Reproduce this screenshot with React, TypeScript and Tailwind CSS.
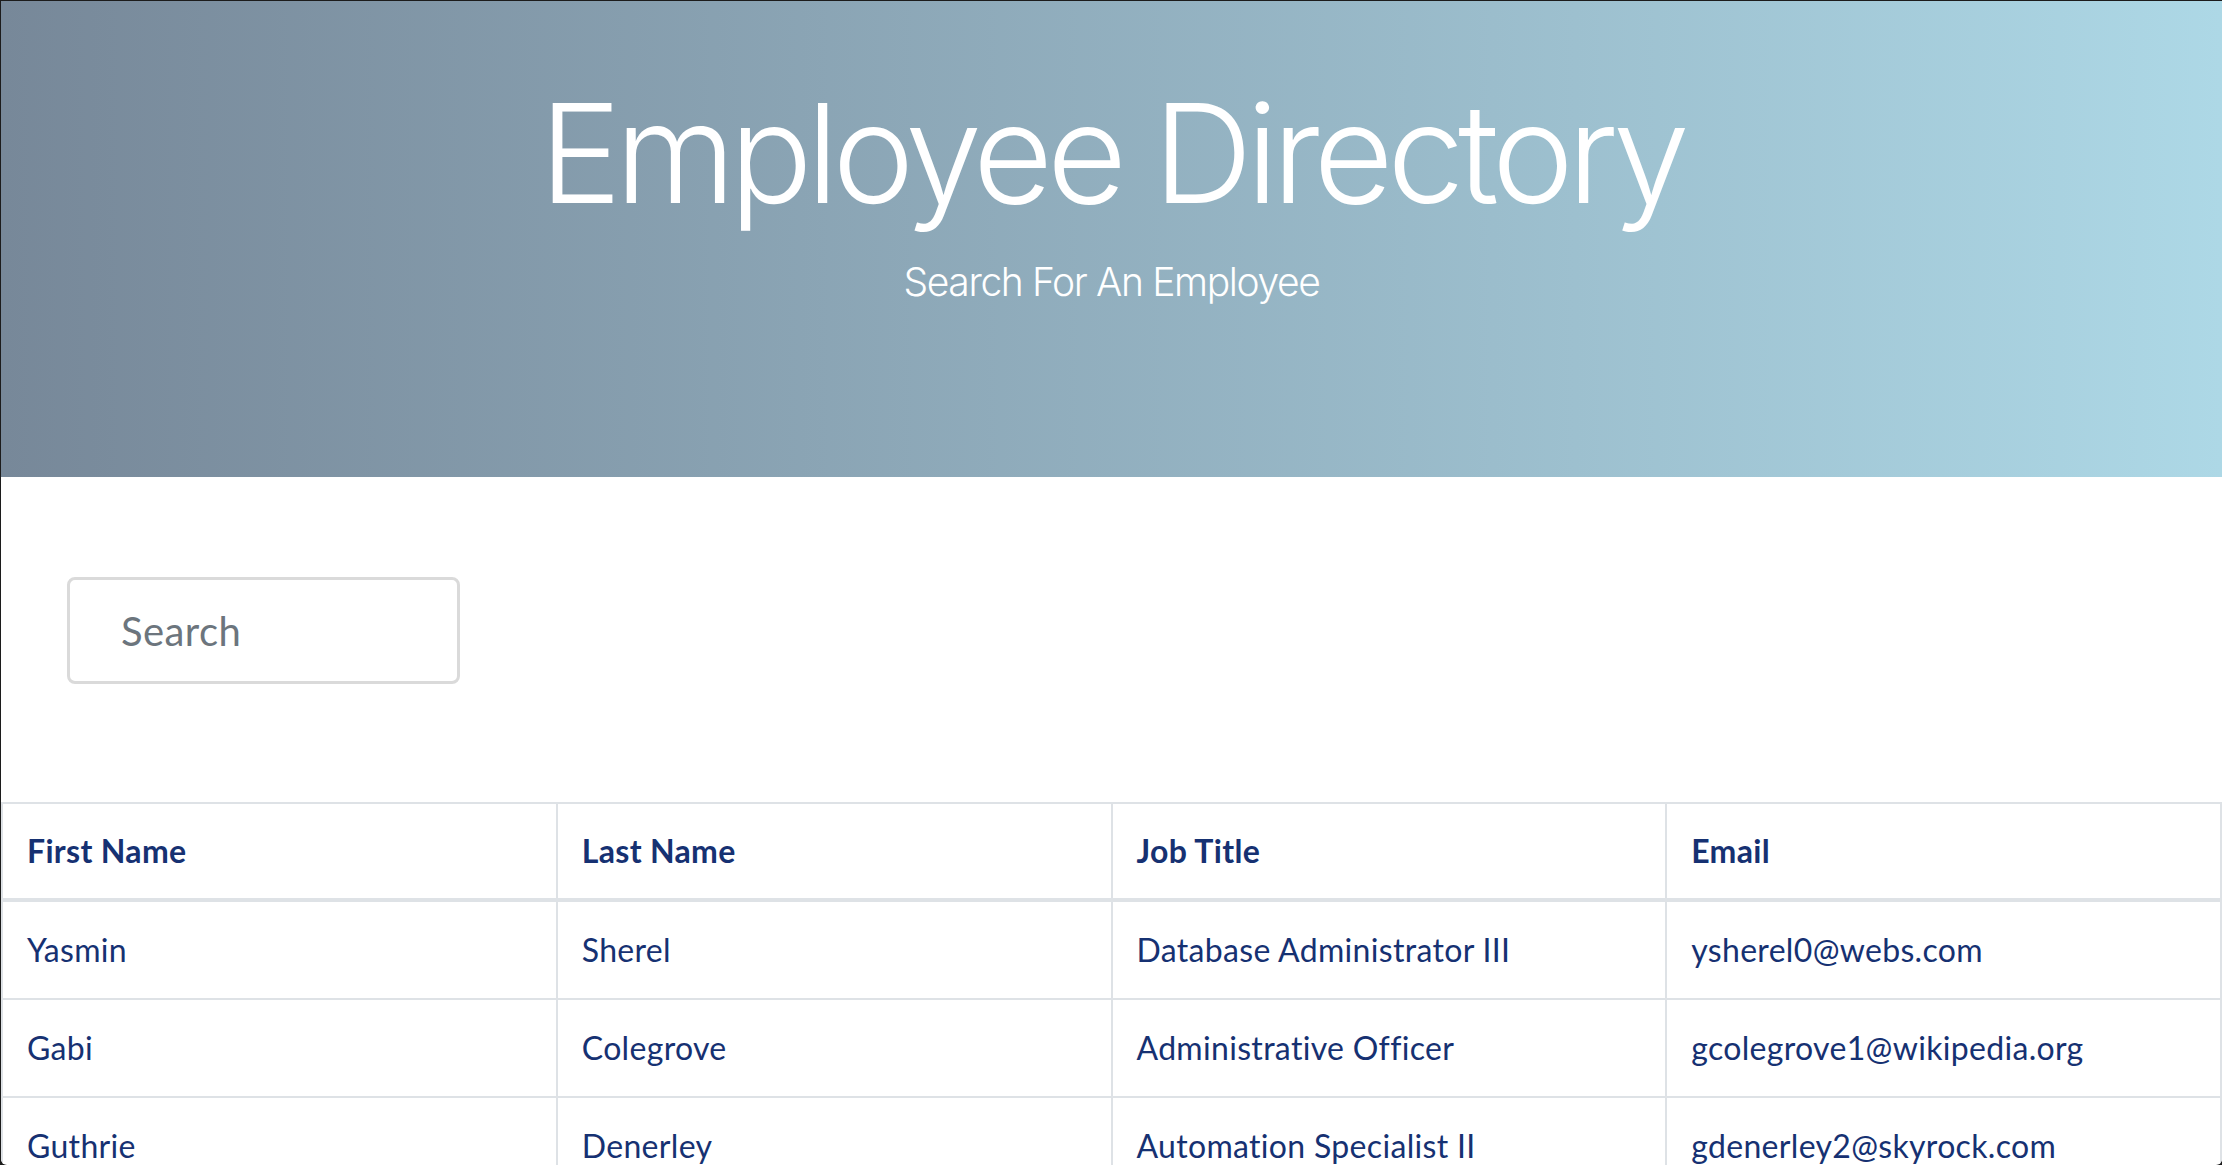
import React, { useState } from 'react';

type Employee = { first: string; last: string; title: string; email: string };

const employees: Employee[] = [
    { first: 'Yasmin', last: 'Sherel', title: 'Database Administrator III', email: 'ysherel0@webs.com' },
    { first: 'Gabi', last: 'Colegrove', title: 'Administrative Officer', email: 'gcolegrove1@wikipedia.org' },
    { first: 'Guthrie', last: 'Denerley', title: 'Automation Specialist II', email: 'gdenerley2@skyrock.com' },
    { first: 'Ardys', last: 'Ellerby', title: 'Analyst Programmer', email: 'aellerby3@google.ca' },
];

const Header = () => (
    <header className="h-[476px] shrink-0 bg-linear-to-r from-[#778899] to-[#add8e6] text-white text-center font-['Inter',sans-serif] pt-[69px]">
        <h1 className="text-[138px] leading-[166px] font-light tracking-[-0.045em]">Employee Directory</h1>
        <p className="mt-[17px] text-[39px] leading-[58px] font-light tracking-[-0.035em]">Search For An Employee</p>
    </header>
);

const SearchBox = ({ value, onChange }: { value: string; onChange: (v: string) => void }) => (
    <div className="pt-[100px] pb-[118px] pl-[66px]">
        <input
            value={value}
            onChange={e => onChange(e.target.value)}
            placeholder="Search"
            className="w-[393px] h-[107px] border-[3px] border-[#dadada] rounded-[8px] pl-[51px] text-[40px] tracking-[0.01em] font-['Lato',sans-serif] text-[#495057] placeholder:text-[#6c757d] outline-none"
        />
    </div>
);

const cell = 'leading-[48px] px-6 py-6 border-r-2 border-b-2 border-[#dee2e6]';

const EmployeeTable = ({ rows }: { rows: Employee[] }) => (
    <table className="w-full table-fixed border-separate border-spacing-0 border-t-2 border-l-2 border-[#dee2e6] font-['Lato',sans-serif] text-[32px] tracking-[0.01em] text-[#163172]">
        <thead>
            <tr>
                {['First Name', 'Last Name', 'Job Title', 'Email'].map(h => (
                    <th key={h} className="text-left font-bold leading-[48px] px-6 py-[23px] border-r-2 border-b-4 border-[#dee2e6]">{h}</th>
                ))}
            </tr>
        </thead>
        <tbody>
            {rows.map(r => (
                <tr key={r.email}>
                    <td className={cell}>{r.first}</td>
                    <td className={cell}>{r.last}</td>
                    <td className={cell}>{r.title}</td>
                    <td className={cell}>{r.email}</td>
                </tr>
            ))}
        </tbody>
    </table>
);

export default function App() {
    const [query, setQuery] = useState('');
    const q = query.toLowerCase();
    const rows = employees.filter(e =>
        [e.first, e.last, e.title, e.email].some(v => v.toLowerCase().includes(q))
    );

    return (
        <div className="w-[2222px] h-[1165px] bg-[#1c1c1c] overflow-hidden">
            <div className="ml-px mt-px h-[1164px] bg-white rounded-b-[6px] overflow-hidden flex flex-col">
                <Header />
                <SearchBox value={query} onChange={setQuery} />
                <EmployeeTable rows={rows} />
            </div>
        </div>
    );
}
